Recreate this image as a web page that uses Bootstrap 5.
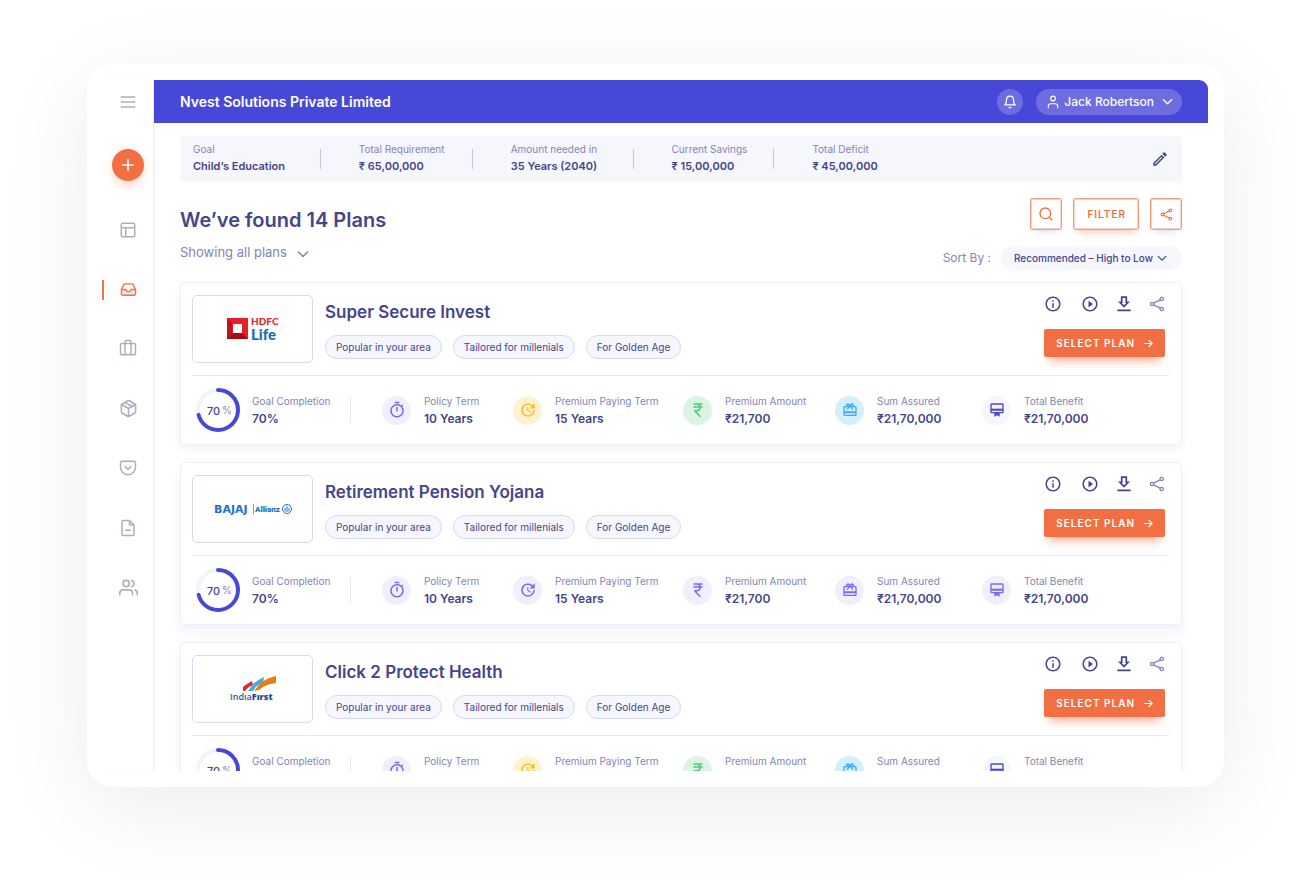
<!DOCTYPE html>
<html lang="en">
<head>
<meta charset="utf-8">
<meta name="viewport" content="width=device-width, initial-scale=1">
<title>Nvest Solutions – Plans</title>
<link href="https://cdn.jsdelivr.net/npm/bootstrap@5.3.0/dist/css/bootstrap.min.css" rel="stylesheet">
<style>
:root{--ink:#46458b;--soft:#8584b5;--brand:#4848d8;--accent:#f26f43;--tint:#f6f6fd;--line:#d9d8f0}
body{font-family:"Inter","Open Sans",sans-serif;font-size:12px;line-height:16px;color:var(--ink);background:#fff}
svg{display:block;flex:none}
.ln{fill:none;stroke:currentColor;stroke-width:2;stroke-linecap:round;stroke-linejoin:round}
.fl{fill:currentColor}
.page{height:100vh;padding:64px 86px 109px 87px}
.shell{padding:16px;border-radius:26px;box-shadow:0 20px 90px rgba(0,0,0,.08)}
.side{width:51px;border-right:1px solid #ececf1;box-shadow:1px 0 3px rgba(0,0,0,.03);color:#aeadc0}
.side-top{height:43px}
.side a,.side button{color:inherit}
.bare{border:0;background:none;padding:0;color:inherit}
.side .add{width:32px;height:32px;border-radius:50%;background:var(--accent);color:#fff;margin:26px 0 40px;box-shadow:0 5px 8px rgba(242,111,67,.25)}
.side ul{height:376px}
.side li{width:100%;position:relative}
.side a.current{color:var(--accent)}
.side a.current::before{content:"";position:absolute;left:-1px;top:-1px;width:2px;height:20px;background:var(--accent)}
.topbar{height:43px;padding:0 26px;background:var(--brand);color:#fff;border-radius:0 9px 0 0}
.org{font-size:14px;font-weight:600}
.bell{width:26px;height:26px;border-radius:50%;background:#6d6de0;margin-right:13px}
.user{height:26px;padding:0 9px 0 10px;border-radius:13px;background:#6d6de0;font-size:12px;font-weight:500}
.body-area{padding:13px 26px 0;overflow:hidden}
.goalbar{height:46px;background:var(--tint);border-radius:4px;padding:0 13px;display:grid;grid-template-columns:127fr 152fr 161fr 141fr 396fr;align-items:center}
.goalbar dl{margin:0 0 2px}
.goalbar dt,.stat dt{font-weight:400;color:var(--soft);font-size:10px;line-height:17px;white-space:nowrap}
.goalbar dd{margin:0;font-weight:600;font-size:11px;line-height:17px;white-space:nowrap}
.goalbar dd,.goalbar dt{font-size:11px}
.goalbar dt{font-size:10px}
.tick{width:1px;height:20px;background:#c3c1f1;margin-right:38px;flex:none}
h1{font-size:20px;line-height:28px;font-weight:600;margin:0}
.pick{appearance:none;border:0;background:none;color:inherit;padding:0;font-size:13px;line-height:20px;grid-area:1/1}
.pick-wrap{display:inline-grid;align-items:center}
.pick-wrap svg{grid-area:1/1;justify-self:end;pointer-events:none}
.pick-wrap.all{color:var(--soft)}
.pick-wrap.all .pick{padding-right:22px}
.pick-wrap.sort .pick{background:var(--tint);border-radius:12px;height:24px;padding:0 29px 0 13px;font-size:10px;font-weight:500}
.pick-wrap.sort svg{margin-right:15px}
.sort-label{font-size:12px;color:var(--soft);margin-right:10px}
.tools{gap:11px}
.tool{height:32px;min-width:32px;border:1px solid #f59a7b;border-radius:2px;background:#fff;color:var(--accent);font-size:10px;font-weight:600;letter-spacing:1px;padding:0;outline:1px solid #fbd3c6;outline-offset:-2px;box-shadow:0 7px 7px -5px #e3dffa}
.tool.wide{padding:0 12px 0 13px;box-shadow:0 7px 7px -4px #fbd0c3}
.plan{border:1px solid #efeff4;border-radius:5px;background:#fff;height:163px;padding:12px 12px 0 11px;margin-bottom:17px;box-shadow:0 4px 8px rgba(40,40,60,.06)}
.plan.picked{border-color:#eeedfa;box-shadow:0 8px 12px rgba(90,88,220,.08)}
.logo-box{width:121px;height:68px;border:1px solid var(--line);border-radius:5px}
h2{font-size:17px;line-height:24px;font-weight:600;margin:5px 0 11px}
.chips{gap:11px}
.chip{height:24px;line-height:20px;padding:1px 10px;border:1px solid var(--line);border-radius:12px;background:var(--tint);font-size:10px;white-space:nowrap}
.go{height:28px;padding:0 11px 0 12px;border:0;border-radius:2px;background:var(--accent);color:#fff;font-size:10px;font-weight:600;letter-spacing:1px;box-shadow:0 9px 9px -5px rgba(242,111,67,.55)}
.rule{border-top:1px solid #e9e9f0;margin-top:12px}
.plan-facts{display:grid;grid-template-columns:190fr 131fr 170fr 152fr 147fr 187fr;align-items:center;margin:11px 0 0}
.fact-div{width:1px;height:26px;background:#e6e5f0}
.stat dd{margin:0;font-size:12px;line-height:18px;font-weight:600;white-space:nowrap}
.disc{width:29px;height:29px;border-radius:50%;background:#f1eefe;color:#7d68f6;margin-right:13px;flex:none}
.disc.amber{background:#fff2d2;color:#fbbf13}
.disc.green{background:#dbf4e3;color:#52c878}
.disc.sky{background:#d4effe;color:#3fabf8}
.disc.navy{background:var(--tint);color:var(--brand)}
.pale{color:var(--soft)}
</style>
</head>
<body>
<svg width="0" height="0" class="position-absolute" aria-hidden="true">
<symbol id="timer" viewBox="0 0 24 24"><path class="fl" d="M15 1H9v2h6V1zm-4 13h2V8h-2v6zm8.03-6.61l1.42-1.42c-.43-.51-.9-.99-1.41-1.41l-1.42 1.42C16.07 4.74 14.12 4 12 4c-4.97 0-9 4.03-9 9s4.02 9 9 9 9-4.03 9-9c0-2.12-.74-4.07-1.97-5.61zM12 20c-3.87 0-7-3.13-7-7s3.13-7 7-7 7 3.13 7 7-3.13 7-7 7z"/></symbol>
<symbol id="renew" viewBox="0 0 24 24"><path class="fl" d="M21 10.12h-6.78l2.74-2.82c-2.73-2.7-7.15-2.8-9.88-.1-2.73 2.71-2.73 7.08 0 9.79s7.15 2.71 9.88 0C18.32 15.65 19 14.08 19 12.1h2c0 1.98-.88 4.55-2.64 6.29-3.51 3.48-9.21 3.48-12.72 0-3.5-3.47-3.53-9.11-.02-12.58s9.14-3.47 12.65 0L21 3v7.12zM12.5 8v4.25l3.5 2.08-.72 1.21L11 13V8h1.5z"/></symbol>
<symbol id="rupee" viewBox="0 0 24 24"><path class="fl" d="M13.66 7c-.56-1.18-1.76-2-3.16-2H6V3h12v2h-3.26c.48.58.84 1.26 1.05 2H18v2h-2.02c-.25 2.8-2.61 5-5.48 5h-.73l6.73 7h-2.77L7 14v-2h3.5c1.76 0 3.22-1.3 3.46-3H6V7h7.66z"/></symbol>
<symbol id="gift" viewBox="0 0 24 24"><path class="fl" d="M20 6h-2.18c.11-.31.18-.65.18-1 0-1.66-1.34-3-3-3-1.05 0-1.96.54-2.5 1.35l-.5.67-.5-.68C10.96 2.54 10.05 2 9 2 7.34 2 6 3.34 6 5c0 .35.07.69.18 1H4c-1.11 0-1.99.89-1.99 2L2 19c0 1.11.89 2 2 2h16c1.11 0 2-.89 2-2V8c0-1.11-.89-2-2-2zm-5-2c.55 0 1 .45 1 1s-.45 1-1 1-1-.45-1-1 .45-1 1-1zM9 4c.55 0 1 .45 1 1s-.45 1-1 1-1-.45-1-1 .45-1 1-1zm11 15H4v-2h16v2zm0-5H4V8h5.08L7 10.83 8.62 12 11 8.76l1-1.36 1 1.36L15.38 12 17 10.83 14.92 8H20v6z"/></symbol>
<symbol id="benefit" viewBox="0 0 24 24"><path fill="currentColor" opacity=".25" d="M3 10h18v3H3z"/><path class="fl" d="M20 2H4c-1.11 0-2 .89-2 2v11c0 1.11.89 2 2 2h4v5l4-2 4 2v-5h4c1.11 0 2-.89 2-2V4c0-1.11-.89-2-2-2zm0 13H4v-2h16v2zm0-5H4V4h16v6z"/></symbol>
<symbol id="info" viewBox="0 0 24 24"><path class="fl" d="M11 7h2v2h-2zm0 4h2v6h-2zm1-9C6.48 2 2 6.48 2 12s4.48 10 10 10 10-4.48 10-10S17.52 2 12 2zm0 18c-4.41 0-8-3.59-8-8s3.59-8 8-8 8 3.59 8 8-3.59 8-8 8z"/></symbol>
<symbol id="play" viewBox="0 0 24 24"><path class="fl" d="M10 16.5l6-4.5-6-4.5v9zM12 2C6.48 2 2 6.48 2 12s4.48 10 10 10 10-4.48 10-10S17.52 2 12 2zm0 18c-4.41 0-8-3.59-8-8s3.59-8 8-8 8 3.59 8 8-3.59 8-8 8z"/></symbol>
<symbol id="download" viewBox="2 0 20 24"><path class="fl" d="M16.500 8.500V1h-9v7.500H3.400L12 17.500l8.600-9h-4.100zM12 13.800l-3.200-3.300H10V3.500h4v7h1.200L12 13.800zM2.500 20h19v2.500h-19z"/></symbol>
<symbol id="share" viewBox="0 0 24 24"><g class="ln"><circle cx="19" cy="4.500" r="2.500"/><circle cx="4.500" cy="12" r="2.500"/><circle cx="19" cy="19.500" r="2.500"/><path d="M7 10.700l9.600-5M7 13.300l9.600 5"/></g></symbol>
<symbol id="arrow" viewBox="0 0 24 24"><path class="ln" style="stroke-width:2.500" d="M3 12h17M13 5l7 7-7 7"/></symbol>
<symbol id="down" viewBox="0 0 24 24"><path class="ln" style="stroke-width:3" d="M3 8l9 9 9-9"/></symbol>
</svg>

<div class="page">
<div class="shell bg-white h-100 d-flex">
  <aside class="side d-flex flex-column align-items-center flex-shrink-0">
    <div class="side-top d-flex align-items-center">
      <button class="bare" aria-label="Menu"><svg width="20" height="20" viewBox="0 0 24 24"><path class="ln" d="M4 6h16M4 12h16M4 18h16"/></svg></button>
    </div>
    <button class="bare add d-flex align-items-center justify-content-center" aria-label="Add"><svg width="18" height="18" viewBox="0 0 24 24"><path class="ln" d="M12 5v14M5 12h14"/></svg></button>
    <ul class="list-unstyled m-0 w-100 d-flex flex-column justify-content-between">
      <li><a href="#" class="d-flex justify-content-center" aria-label="Dashboard"><svg width="18" height="18" viewBox="0 0 24 24"><path class="ln" d="M5 3h14a2 2 0 0 1 2 2v14a2 2 0 0 1-2 2H5a2 2 0 0 1-2-2V5a2 2 0 0 1 2-2zM3 9h18M9 21V9"/></svg></a></li>
      <li><a href="#" class="current d-flex justify-content-center" aria-label="Inbox"><svg width="17" height="17" viewBox="0 0 24 24"><path fill="#fde9e2" d="M2 12h6l2 3h4l2-3h6v6a2 2 0 0 1-2 2H4a2 2 0 0 1-2-2z"/><path class="ln" d="M22 12h-6l-2 3h-4l-2-3H2M5.450 5.110L2 12v6a2 2 0 0 0 2 2h16a2 2 0 0 0 2-2v-6l-3.450-6.890A2 2 0 0 0 16.760 4H7.240a2 2 0 0 0-1.790 1.110z"/></svg></a></li>
      <li><a href="#" class="d-flex justify-content-center" aria-label="Portfolio"><svg width="18" height="18" viewBox="0 0 24 24"><path class="ln" d="M4 6h16a2 2 0 0 1 2 2v11a2 2 0 0 1-2 2H4a2 2 0 0 1-2-2V8a2 2 0 0 1 2-2zM16 21V4a2 2 0 0 0-2-2h-4a2 2 0 0 0-2 2v17"/></svg></a></li>
      <li><a href="#" class="d-flex justify-content-center" aria-label="Products"><svg width="19" height="19" viewBox="0 0 24 24"><path class="ln" d="M16.500 9.400l-9-5.190M21 16V8a2 2 0 0 0-1-1.730l-7-4a2 2 0 0 0-2 0l-7 4A2 2 0 0 0 3 8v8a2 2 0 0 0 1 1.730l7 4a2 2 0 0 0 2 0l7-4A2 2 0 0 0 21 16zM3.270 6.960L12 12.010l8.730-5.050M12 22.080V12"/></svg></a></li>
      <li><a href="#" class="d-flex justify-content-center" aria-label="Policies"><svg width="18" height="18" viewBox="0 0 24 24"><path class="ln" d="M4 3h16a2 2 0 0 1 2 2v6a10 10 0 0 1-20 0V5a2 2 0 0 1 2-2zM8 10l4 4 4-4"/></svg></a></li>
      <li><a href="#" class="d-flex justify-content-center" aria-label="Documents"><svg width="18" height="18" viewBox="0 0 24 24"><path class="ln" d="M14 2H6a2 2 0 0 0-2 2v16a2 2 0 0 0 2 2h12a2 2 0 0 0 2-2V8zM14 2v6h6M9 15h6"/></svg></a></li>
      <li><a href="#" class="d-flex justify-content-center" aria-label="Clients"><svg width="19" height="19" viewBox="0 0 24 24"><path class="ln" d="M17 21v-2a4 4 0 0 0-4-4H5a4 4 0 0 0-4 4v2M23 21v-2a4 4 0 0 0-3-3.870M16 3.130a4 4 0 0 1 0 7.750"/><circle class="ln" cx="9" cy="7" r="4"/></svg></a></li>
    </ul>
  </aside>

  <div class="flex-grow-1 d-flex flex-column overflow-hidden">
    <header class="topbar d-flex align-items-center justify-content-between flex-shrink-0">
      <span class="org">Nvest Solutions Private Limited</span>
      <div class="d-flex align-items-center">
        <button class="bare bell d-flex align-items-center justify-content-center text-white" aria-label="Notifications"><svg width="14" height="14" viewBox="0 0 24 24"><path class="ln" d="M18 8A6 6 0 0 0 6 8c0 7-3 9-3 9h18s-3-2-3-9M13.730 21a2 2 0 0 1-3.460 0"/></svg></button>
        <button class="bare user d-flex align-items-center text-white"><svg class="me-1" width="14" height="14" viewBox="0 0 24 24"><path class="ln" d="M20 22v-3a4 4 0 0 0-4-4H8a4 4 0 0 0-4 4v3"/><circle class="ln" cx="12" cy="6" r="4"/></svg>Jack Robertson<svg class="ms-2" width="11" height="11"><use href="#down"/></svg></button>
      </div>
    </header>

    <main class="body-area flex-grow-1">
      <div class="goalbar">
        <dl><dt>Goal</dt><dd>Child’s Education</dd></dl>
        <div class="d-flex align-items-center"><span class="tick"></span><dl><dt>Total Requirement</dt><dd>₹ 65,00,000</dd></dl></div>
        <div class="d-flex align-items-center"><span class="tick"></span><dl><dt>Amount needed in</dt><dd>35 Years (2040)</dd></dl></div>
        <div class="d-flex align-items-center"><span class="tick"></span><dl><dt>Current Savings</dt><dd>₹ 15,00,000</dd></dl></div>
        <div class="d-flex align-items-center"><span class="tick"></span><dl><dt>Total Deficit</dt><dd>₹ 45,00,000</dd></dl>
          <button class="bare ms-auto" aria-label="Edit goal"><svg width="18" height="18" viewBox="0 0 24 24"><path class="fl" d="M14.060 9.020l.92.92L5.920 19H5v-.92l9.060-9.060M17.660 3c-.25 0-.51.1-.7.29l-1.830 1.830 3.750 3.750 1.830-1.830c.39-.39.39-1.020 0-1.410l-2.340-2.340c-.2-.2-.45-.29-.71-.29zm-3.600 3.190L3 17.250V21h3.750L17.810 9.940l-3.750-3.750z"/></svg></button></div>
      </div>

      <div class="d-flex justify-content-between mt-3 mb-2 pb-1">
        <div>
          <h1 class="mt-2">We’ve found 14 Plans</h1>
          <div class="pick-wrap all mt-2"><select class="pick" aria-label="Plans shown"><option>Showing all plans</option></select><svg class="mt-1" width="12" height="12"><use href="#down"/></svg></div>
        </div>
        <div class="d-flex flex-column align-items-end">
          <div class="d-flex tools">
            <button class="tool d-flex align-items-center justify-content-center" aria-label="Search"><svg width="16" height="16" viewBox="0 0 24 24"><circle class="ln" cx="11" cy="11" r="8"/><path class="ln" d="M21 21l-4-4"/></svg></button>
            <button class="tool wide">FILTER</button>
            <button class="tool d-flex align-items-center justify-content-center" aria-label="Share"><svg width="13" height="13"><use href="#share"/></svg></button>
          </div>
          <div class="d-flex align-items-center mt-3">
            <label class="sort-label" for="sort">Sort By :</label>
            <div class="pick-wrap sort"><select class="pick" id="sort"><option>Recommended – High to Low</option></select><svg width="10" height="10"><use href="#down"/></svg></div>
          </div>
        </div>
      </div>

      <article class="plan">
        <div class="d-flex">
          <div class="logo-box d-flex align-items-center justify-content-center">
            <svg width="54" height="28" viewBox="0 0 54 28" role="img" aria-label="HDFC Life"><path fill="#e71f26" d="M1 3h21v21H1z"/><path fill="#c21418" d="M1 3l5 5v11l-5 5z"/><path fill="#a50d10" d="M1 24l6-6h9l6 6z"/><path fill="#fff" d="M7 9h9v9H7z"/><text x="25" y="10" font-family="Lato" font-weight="900" font-size="10" fill="#e71f26">HDFC</text><text x="25" y="25" font-family="Lato" font-weight="900" font-size="15" fill="#1b6cab">Life</text></svg>
          </div>
          <div class="ps-2 ms-1 flex-grow-1">
            <h2>Super Secure Invest</h2>
            <div class="d-flex chips"><span class="chip">Popular in your area</span><span class="chip">Tailored for millenials</span><span class="chip">For Golden Age</span></div>
          </div>
          <div class="pe-1">
            <div class="d-flex justify-content-between mb-3"><button class="bare" aria-label="Info"><svg width="18" height="18"><use href="#info"/></svg></button><button class="bare" aria-label="Play"><svg width="18" height="18"><use href="#play"/></svg></button><button class="bare" aria-label="Download"><svg width="14" height="18"><use href="#download"/></svg></button><button class="bare pale" aria-label="Share plan"><svg width="16" height="18"><use href="#share"/></svg></button></div>
            <button class="go d-flex align-items-center">SELECT PLAN<svg class="ms-2" width="11" height="11"><use href="#arrow"/></svg></button>
          </div>
        </div>
        <div class="rule"></div>
        <div class="plan-facts">
          <div class="d-flex align-items-center stat"><svg class="mx-1" width="44" height="46" viewBox="0 0 44 46"><g fill="none" stroke-width="4" transform="rotate(-90 22 23)"><circle cx="22" cy="23" r="20" stroke="#f4f3fd"/><circle cx="22" cy="23" r="20" stroke="#4848d8" pathLength="100" stroke-dasharray="71 29" stroke-linecap="round"/></g><text x="11" y="28" font-size="11" font-weight="500" fill="#46458b">70</text><text x="26" y="27" font-size="10" fill="#8584b5">%</text></svg><dl class="m-0 ps-2 me-3 pe-1"><dt>Goal Completion</dt><dd>70%</dd></dl><span class="fact-div"></span></div>
          <div class="d-flex align-items-center stat"><span class="disc d-flex align-items-center justify-content-center"><svg width="18" height="18"><use href="#timer"/></svg></span><dl class="m-0"><dt>Policy Term</dt><dd>10 Years</dd></dl></div>
          <div class="d-flex align-items-center stat"><span class="disc amber d-flex align-items-center justify-content-center"><svg width="18" height="18"><use href="#renew"/></svg></span><dl class="m-0"><dt>Premium Paying Term</dt><dd>15 Years</dd></dl></div>
          <div class="d-flex align-items-center stat"><span class="disc green d-flex align-items-center justify-content-center"><svg width="18" height="18"><use href="#rupee"/></svg></span><dl class="m-0"><dt>Premium Amount</dt><dd>₹21,700</dd></dl></div>
          <div class="d-flex align-items-center stat"><span class="disc sky d-flex align-items-center justify-content-center"><svg width="16" height="16"><use href="#gift"/></svg></span><dl class="m-0"><dt>Sum Assured</dt><dd>₹21,70,000</dd></dl></div>
          <div class="d-flex align-items-center stat"><span class="disc navy d-flex align-items-center justify-content-center"><svg width="16" height="16"><use href="#benefit"/></svg></span><dl class="m-0"><dt>Total Benefit</dt><dd>₹21,70,000</dd></dl></div>
        </div>
      </article>

      <article class="plan picked">
        <div class="d-flex">
          <div class="logo-box d-flex align-items-center justify-content-center">
            <svg width="80" height="14" viewBox="0 0 80 14" role="img" aria-label="Bajaj Allianz"><text x="1" y="11" font-family="DejaVu Sans" font-weight="700" font-size="11" fill="#2371c4">BAJAJ</text><path stroke="#6ea3d8" d="M40.500 2v10"/><text x="42" y="10" font-family="Roboto" font-weight="900" font-size="8" fill="#2371c4">Allianz</text><g fill="none" stroke="#2371c4"><circle cx="74" cy="7" r="4.500"/><path d="M72 9.500V6M74 10V4M76 9.500V6"/></g></svg>
          </div>
          <div class="ps-2 ms-1 flex-grow-1">
            <h2>Retirement Pension Yojana</h2>
            <div class="d-flex chips"><span class="chip">Popular in your area</span><span class="chip">Tailored for millenials</span><span class="chip">For Golden Age</span></div>
          </div>
          <div class="pe-1">
            <div class="d-flex justify-content-between mb-3"><button class="bare" aria-label="Info"><svg width="18" height="18"><use href="#info"/></svg></button><button class="bare" aria-label="Play"><svg width="18" height="18"><use href="#play"/></svg></button><button class="bare" aria-label="Download"><svg width="14" height="18"><use href="#download"/></svg></button><button class="bare pale" aria-label="Share plan"><svg width="16" height="18"><use href="#share"/></svg></button></div>
            <button class="go d-flex align-items-center">SELECT PLAN<svg class="ms-2" width="11" height="11"><use href="#arrow"/></svg></button>
          </div>
        </div>
        <div class="rule"></div>
        <div class="plan-facts">
          <div class="d-flex align-items-center stat"><svg class="mx-1" width="44" height="46" viewBox="0 0 44 46"><g fill="none" stroke-width="4" transform="rotate(-90 22 23)"><circle cx="22" cy="23" r="20" stroke="#f4f3fd"/><circle cx="22" cy="23" r="20" stroke="#4848d8" pathLength="100" stroke-dasharray="71 29" stroke-linecap="round"/></g><text x="11" y="28" font-size="11" font-weight="500" fill="#46458b">70</text><text x="26" y="27" font-size="10" fill="#8584b5">%</text></svg><dl class="m-0 ps-2 me-3 pe-1"><dt>Goal Completion</dt><dd>70%</dd></dl><span class="fact-div"></span></div>
          <div class="d-flex align-items-center stat"><span class="disc d-flex align-items-center justify-content-center"><svg width="18" height="18"><use href="#timer"/></svg></span><dl class="m-0"><dt>Policy Term</dt><dd>10 Years</dd></dl></div>
          <div class="d-flex align-items-center stat"><span class="disc d-flex align-items-center justify-content-center"><svg width="18" height="18"><use href="#renew"/></svg></span><dl class="m-0"><dt>Premium Paying Term</dt><dd>15 Years</dd></dl></div>
          <div class="d-flex align-items-center stat"><span class="disc d-flex align-items-center justify-content-center"><svg width="18" height="18"><use href="#rupee"/></svg></span><dl class="m-0"><dt>Premium Amount</dt><dd>₹21,700</dd></dl></div>
          <div class="d-flex align-items-center stat"><span class="disc d-flex align-items-center justify-content-center"><svg width="16" height="16"><use href="#gift"/></svg></span><dl class="m-0"><dt>Sum Assured</dt><dd>₹21,70,000</dd></dl></div>
          <div class="d-flex align-items-center stat"><span class="disc d-flex align-items-center justify-content-center"><svg width="16" height="16"><use href="#benefit"/></svg></span><dl class="m-0"><dt>Total Benefit</dt><dd>₹21,70,000</dd></dl></div>
        </div>
      </article>

      <article class="plan">
        <div class="d-flex">
          <div class="logo-box d-flex align-items-center justify-content-center">
            <svg width="48" height="30" viewBox="0 0 48 30" role="img" aria-label="IndiaFirst"><path fill="#e02a2c" d="M14 17v-4c3-3 6-4 9-6l1 4c-3 1-6 3-8 6z"/><path fill="#45a9e2" d="M19 17c2-2 3-5 6-8 3-2 6-4 10-6l-1 6c-4 1-8 4-10 8z"/><path fill="#e87e0b" d="M25 17c3-3 4-6 8-9 4-3 9-5 14-6v7c-8 1-12 3-17 7z"/><text x="1" y="26" font-family="Open Sans" font-weight="600" font-size="9" fill="#2d5d96">Indıa<tspan font-weight="800" fill="#1f4a86">Fırst</tspan></text></svg>
          </div>
          <div class="ps-2 ms-1 flex-grow-1">
            <h2>Click 2 Protect Health</h2>
            <div class="d-flex chips"><span class="chip">Popular in your area</span><span class="chip">Tailored for millenials</span><span class="chip">For Golden Age</span></div>
          </div>
          <div class="pe-1">
            <div class="d-flex justify-content-between mb-3"><button class="bare" aria-label="Info"><svg width="18" height="18"><use href="#info"/></svg></button><button class="bare" aria-label="Play"><svg width="18" height="18"><use href="#play"/></svg></button><button class="bare" aria-label="Download"><svg width="14" height="18"><use href="#download"/></svg></button><button class="bare pale" aria-label="Share plan"><svg width="16" height="18"><use href="#share"/></svg></button></div>
            <button class="go d-flex align-items-center">SELECT PLAN<svg class="ms-2" width="11" height="11"><use href="#arrow"/></svg></button>
          </div>
        </div>
        <div class="rule"></div>
        <div class="plan-facts">
          <div class="d-flex align-items-center stat"><svg class="mx-1" width="44" height="46" viewBox="0 0 44 46"><g fill="none" stroke-width="4" transform="rotate(-90 22 23)"><circle cx="22" cy="23" r="20" stroke="#f4f3fd"/><circle cx="22" cy="23" r="20" stroke="#4848d8" pathLength="100" stroke-dasharray="71 29" stroke-linecap="round"/></g><text x="11" y="28" font-size="11" font-weight="500" fill="#46458b">70</text><text x="26" y="27" font-size="10" fill="#8584b5">%</text></svg><dl class="m-0 ps-2 me-3 pe-1"><dt>Goal Completion</dt><dd>70%</dd></dl><span class="fact-div"></span></div>
          <div class="d-flex align-items-center stat"><span class="disc d-flex align-items-center justify-content-center"><svg width="18" height="18"><use href="#timer"/></svg></span><dl class="m-0"><dt>Policy Term</dt><dd>10 Years</dd></dl></div>
          <div class="d-flex align-items-center stat"><span class="disc amber d-flex align-items-center justify-content-center"><svg width="18" height="18"><use href="#renew"/></svg></span><dl class="m-0"><dt>Premium Paying Term</dt><dd>15 Years</dd></dl></div>
          <div class="d-flex align-items-center stat"><span class="disc green d-flex align-items-center justify-content-center"><svg width="18" height="18"><use href="#rupee"/></svg></span><dl class="m-0"><dt>Premium Amount</dt><dd>₹21,700</dd></dl></div>
          <div class="d-flex align-items-center stat"><span class="disc sky d-flex align-items-center justify-content-center"><svg width="16" height="16"><use href="#gift"/></svg></span><dl class="m-0"><dt>Sum Assured</dt><dd>₹21,70,000</dd></dl></div>
          <div class="d-flex align-items-center stat"><span class="disc navy d-flex align-items-center justify-content-center"><svg width="16" height="16"><use href="#benefit"/></svg></span><dl class="m-0"><dt>Total Benefit</dt><dd>₹21,70,000</dd></dl></div>
        </div>
      </article>
    </main>
  </div>
</div>
</div>
<script src="https://cdn.jsdelivr.net/npm/bootstrap@5.3.0/dist/js/bootstrap.bundle.min.js"></script>
</body>
</html>
